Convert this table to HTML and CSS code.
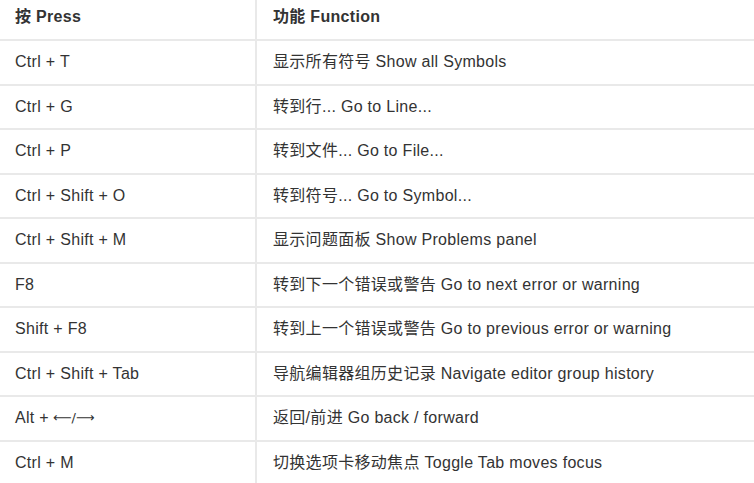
FILE: index.html
```html
<!DOCTYPE html>
<html lang="zh">
<head>
<meta charset="utf-8">
<link rel="stylesheet" href="styles.css">
</head>
<body>
<div class="table">
  <div class="cell head">按 Press</div><div class="cell head c2">功能 Function</div>
  <div class="cell">Ctrl + T</div><div class="cell c2">显示所有符号 Show all Symbols</div>
  <div class="cell">Ctrl + G</div><div class="cell c2">转到行... Go to Line...</div>
  <div class="cell">Ctrl + P</div><div class="cell c2">转到文件... Go to File...</div>
  <div class="cell">Ctrl + Shift + O</div><div class="cell c2">转到符号... Go to Symbol...</div>
  <div class="cell">Ctrl + Shift + M</div><div class="cell c2">显示问题面板 Show Problems panel</div>
  <div class="cell">F8</div><div class="cell c2">转到下一个错误或警告 Go to next error or warning</div>
  <div class="cell">Shift + F8</div><div class="cell c2">转到上一个错误或警告 Go to previous error or warning</div>
  <div class="cell">Ctrl + Shift + Tab</div><div class="cell c2">导航编辑器组历史记录 Navigate editor group history</div>
  <div class="cell">Alt + <span class="arrows">⟵/⟶</span></div><div class="cell c2">返回/前进 Go back / forward</div>
  <div class="cell">Ctrl + M</div><div class="cell c2">切换选项卡移动焦点 Toggle Tab moves focus</div>
</div>
</body>
</html>
```
FILE: styles.css
```css
html, body {
  margin: 0;
  padding: 0;
  background: #fff;
}
body {
  font-family: "Liberation Sans", Arial, "Noto Sans CJK SC", sans-serif;
  font-size: 16px;
  line-height: 20px;
  letter-spacing: 0.3px;
  color: #333;
  overflow: hidden;
}
.table {
  display: grid;
  grid-template-columns: 255px 1fr;
  grid-template-rows: 39px repeat(10, 42.5px);
  gap: 2px;
  background: #e9e9e9;
  width: 754px;
}
.cell {
  background: #fff;
  display: flex;
  align-items: center;
  padding-left: 15px;
  white-space: nowrap;
}
.c2 {
  padding-left: 16px;
}
.head {
  font-weight: bold;
  padding-bottom: 5px;
}
.arrows {
  font-family: "DejaVu Sans", sans-serif;
  font-size: 13px;
  letter-spacing: 0;
  margin-left: 4px;
}
```
